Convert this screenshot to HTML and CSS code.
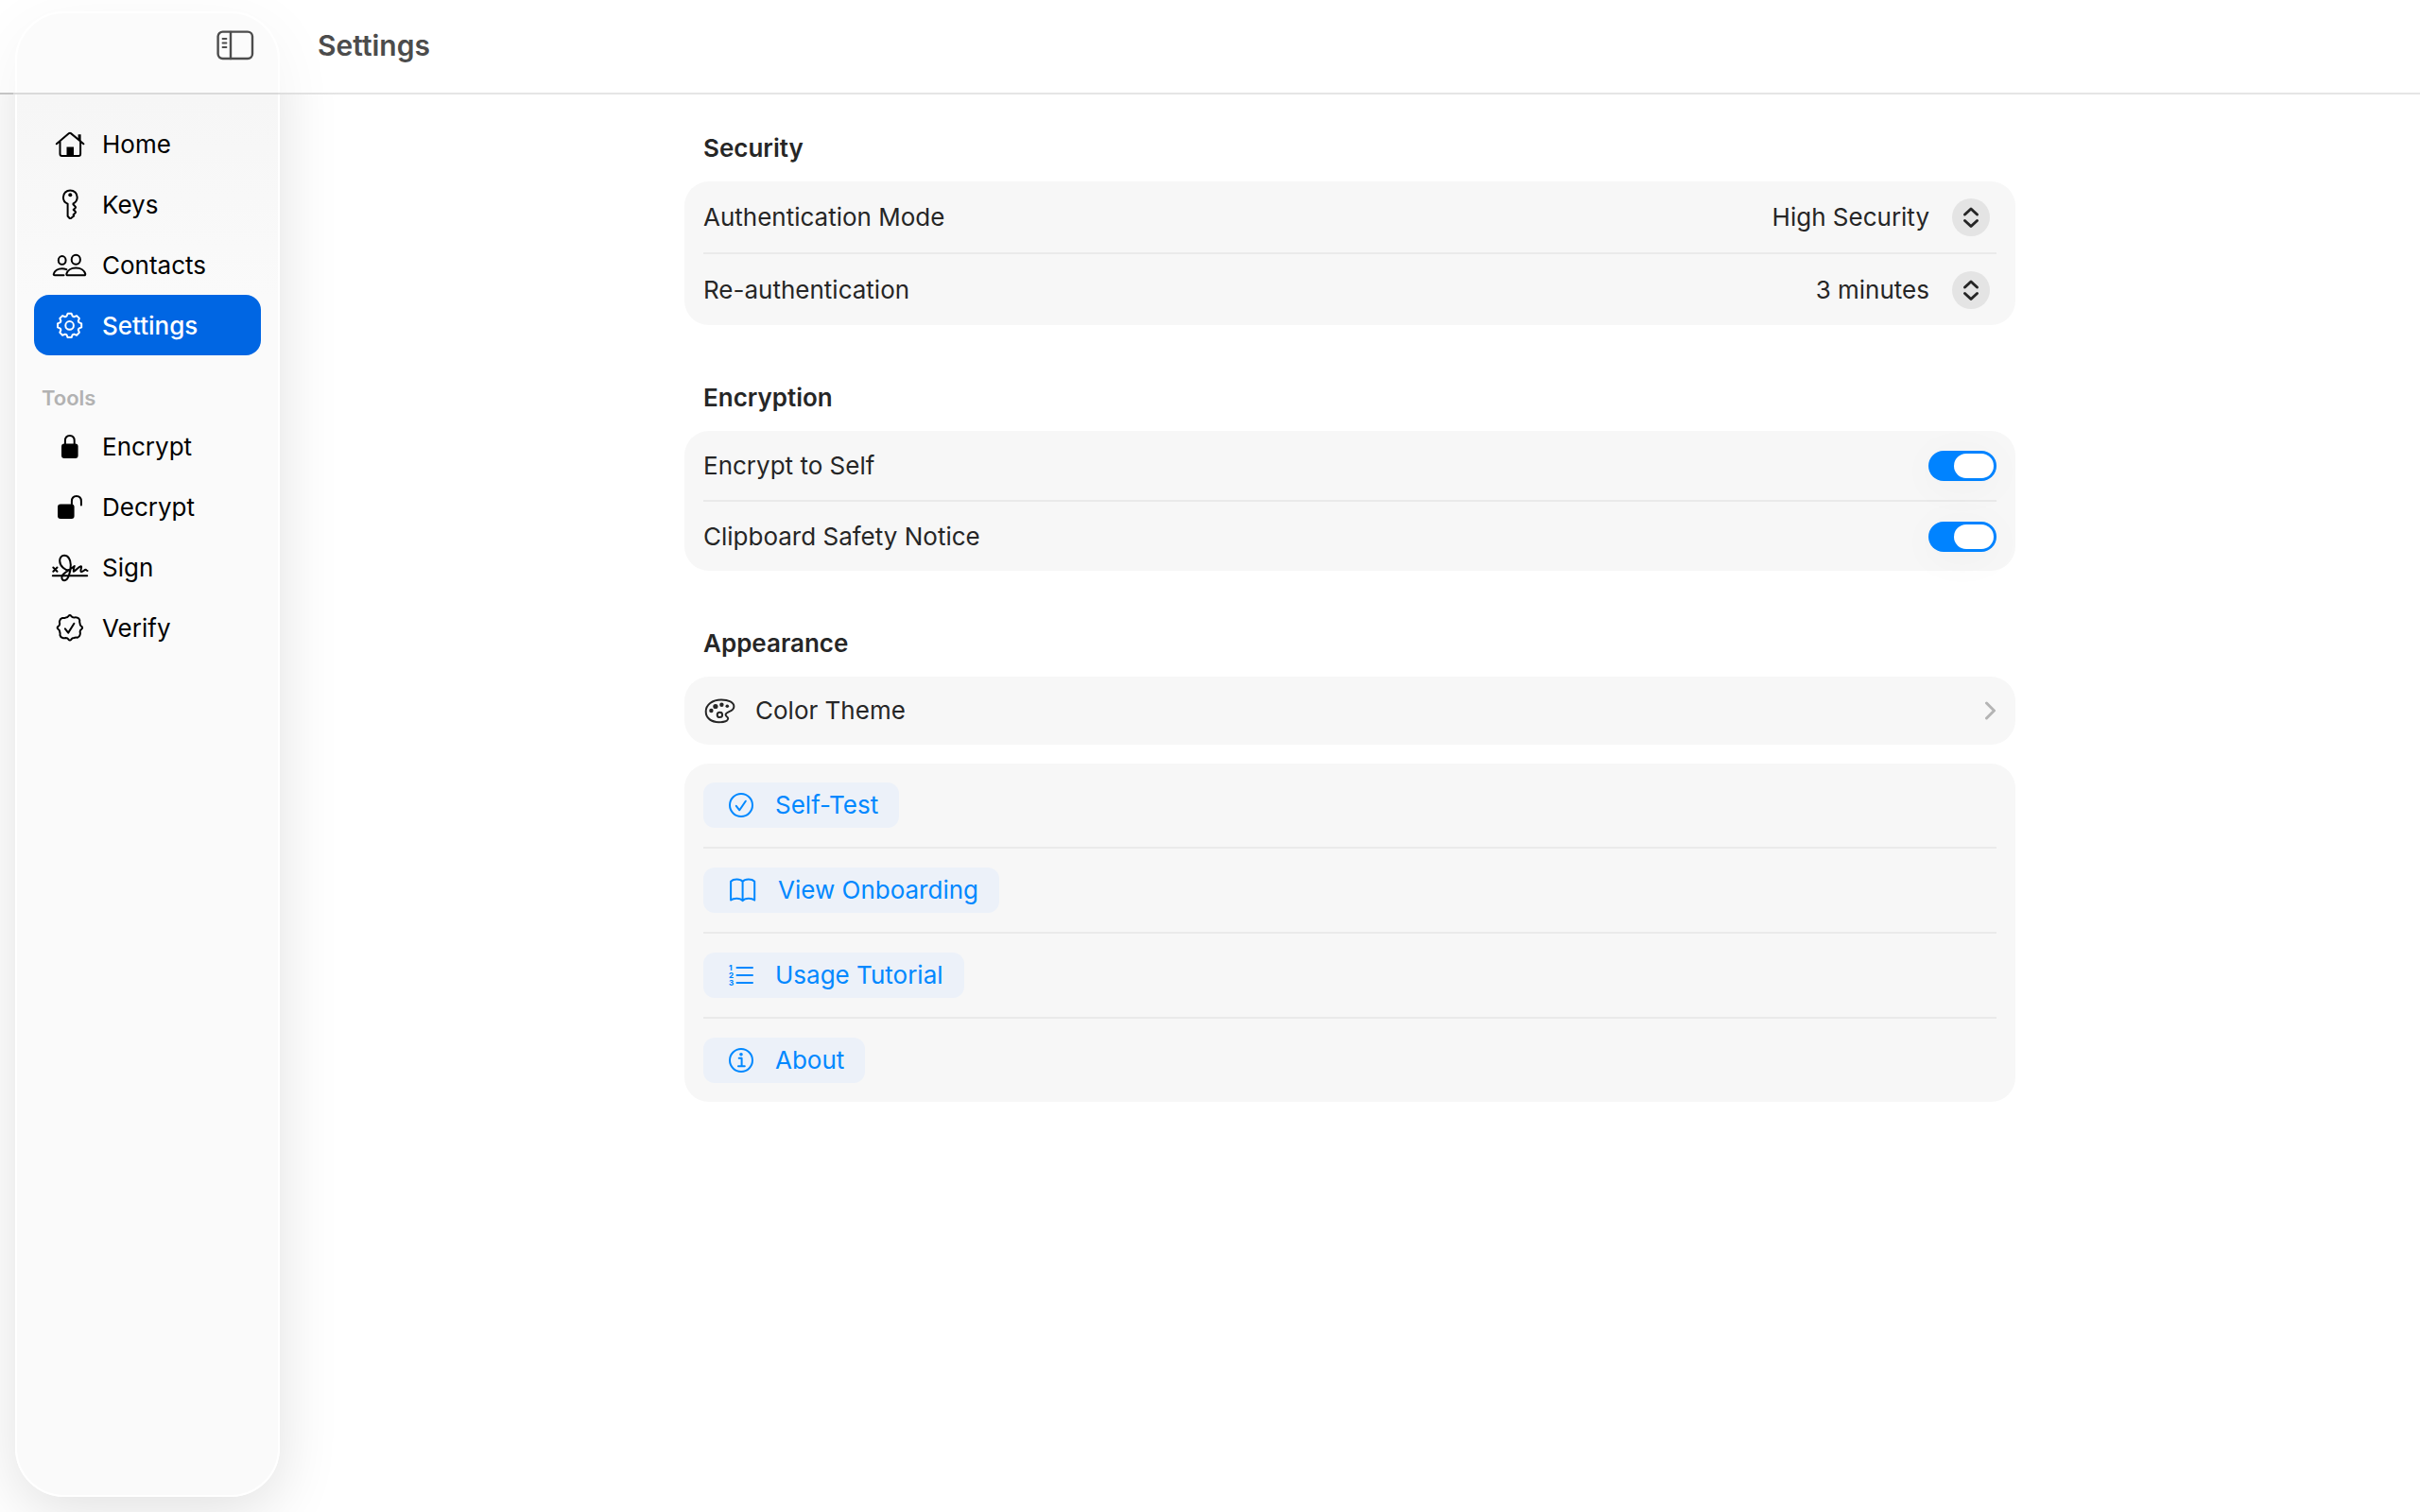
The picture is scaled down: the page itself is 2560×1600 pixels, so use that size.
FILE: index.html
```html
<!DOCTYPE html>
<html lang="en">
<head>
<meta charset="utf-8">
<meta name="viewport" content="width=device-width, initial-scale=1">
<title>Settings</title>
<link rel="stylesheet" href="styles.css">
</head>
<body>
<div class="app">
  <header class="toolbar">
    <div class="toolbar-side">
      <button class="sidebar-toggle" type="button" aria-label="Toggle sidebar">
        <svg width="40" height="32" viewBox="0 0 40 32" fill="none" stroke="currentColor" stroke-width="2.4" stroke-linecap="round"><rect x="1.6" y="1.6" width="36.4" height="28.4" rx="5"/><path d="M15 2v28"/><path d="M6.5 9h4M6.5 13.5h4M6.5 18h4" stroke-width="1.8"/></svg>
      </button>
    </div>
    <h1 class="title">Settings</h1>
  </header>

  <aside class="sidebar">
    <nav class="nav">
      <a class="nav-item" href="#home">
        <svg class="nav-icon" viewBox="0 0 40 32"><path d="M5.800 16.300 19 5.100q1-.8 2 0l13.400 11.200M9.500 14v13q0 2 2 2h17.600q2 0 2-2V14"/><path class="solid" d="M28.600 6.300h3v7.500l-3-2.600zM16.500 19.500h7.500V29h-7.500z"/></svg>
        <span class="nav-label">Home</span></a>
      <a class="nav-item" href="#keys">
        <svg class="nav-icon" viewBox="0 0 40 32"><path d="M17.600 15.600C14.600 14.600 12.900 12 12.900 8.800c0-4.200 3.200-7.400 7.400-7.400s7.400 3.200 7.400 7.400c0 2.900-1.500 5.300-4.200 6.500l-.1 1 2.300 2.300q.6.700 0 1.400l-2 1.900 2 1.900q.6.700 0 1.400L23.600 27.200l.6 1.300-3.200 2.500q-.7.500-1.300 0l-2.100-2.200z"/><circle class="solid" cx="20.300" cy="6.200" r="2"/></svg>
        <span class="nav-label">Keys</span></a>
      <a class="nav-item" href="#contacts">
        <svg class="nav-icon" viewBox="0 0 40 32"><ellipse cx="26.300" cy="10.700" rx="4.600" ry="5"/><ellipse cx="11.700" cy="11.400" rx="3.900" ry="4.400"/><path d="M17.700 27.300h17.300c1.100 0 1.500-.7 1.200-1.700-1-3.300-4.700-6.200-9.900-6.200s-8.900 2.900-9.900 6.200c-.3 1 .2 1.700 1.300 1.700zM13.500 27.300H4c-1 0-1.500-.6-1.200-1.500.9-3 4.300-5.600 8.900-5.600 1.800 0 3.300.4 4.700 1"/></svg>
        <span class="nav-label">Contacts</span></a>
      <a class="nav-item active" href="#settings" aria-current="page">
        <svg class="nav-icon" viewBox="0 0 40 32"><g transform="translate(19.600 16.400)"><path d="M-3.200-9.800-2-12.600 2-12.600 3.200-9.800 4.700-9.200 7.500-10.300 10.300-7.500 9.200-4.700 9.800-3.200 12.600-2 12.600 2 9.800 3.200 9.200 4.700 10.300 7.500 7.500 10.300 4.700 9.200 3.200 9.800 2 12.600-2 12.600-3.200 9.800-4.700 9.200-7.500 10.300-10.300 7.500-9.200 4.700-9.800 3.200-12.600 2-12.600-2-9.800-3.200-9.200-4.700-10.300-7.500-7.500-10.300-4.700-9.200z"/><circle r="4.300"/></g></svg>
        <span class="nav-label">Settings</span></a>
      <h2 class="nav-heading">Tools</h2>
      <a class="nav-item" href="#encrypt">
        <svg class="nav-icon" viewBox="0 0 40 32"><rect class="solid" x="11" y="13.500" width="17.600" height="15.500" rx="3"/><path d="M14.900 14.500V10.500c0-3.500 2-5.500 4.900-5.500s4.900 2 4.900 5.500v4"/></svg>
        <span class="nav-label">Encrypt</span></a>
      <a class="nav-item" href="#decrypt">
        <svg class="nav-icon" viewBox="0 0 40 32"><rect class="solid" x="7" y="13.500" width="17.600" height="15.500" rx="3"/><path d="M21.900 14.500V10.500c0-3.500 2-5.500 5-5.500s5 2 5 5.500v4"/></svg>
        <span class="nav-label">Decrypt</span></a>
      <a class="nav-item" href="#sign">
        <svg class="nav-icon" viewBox="0 0 40 32"><path d="M1.800 25.300h36.400M2.300 16.500l4.200 4.200M6.500 16.500l-4.200 4.200"/><path d="M20 19.500C15 20 9.200 15 9.200 9.500 9.200 6 11 3.800 14 3.800c4 0 6.800 4.200 6.800 10 0 7-2.600 16.400-6.600 16.400-2 0-3.200-1.600-2.700-4 .8-4 8.500-7 13.300-11.200-.6 1.500-1.500 4.200-1 5.700 3-1 4.700-4.700 7.800-5.400 1.800.2-1.600 4.800.4 5.700 2 .4 3.200-2.200 4.600-2.200.8 0 .6 1.200 1.900 1.200"/></svg>
        <span class="nav-label">Sign</span></a>
      <a class="nav-item" href="#verify">
        <svg class="nav-icon" viewBox="0 0 40 32"><g transform="translate(19.900 16.300)"><path d="M-4.400-10.700Q-2.400-10.700-1.500-12.300 0-14.200 1.500-12.300 2.400-10.700 4.400-10.700 6-11.400 7.600-10.700 9.900-10.200 10.400-8 10-6.200 10.700-4.400 10.700-2.400 12.300-1.500 14.200 0 12.300 1.500 10.700 2.400 10.700 4.400 11.400 6 10.700 7.600 10.200 9.900 8 10.400 6.200 10 4.400 10.700 2.400 10.700 1.500 12.300 0 14.200-1.500 12.300-2.400 10.700-4.400 10.700-6 11.400-7.600 10.700-9.900 10.200-10.400 8-10 6.200-10.700 4.400-10.700 2.400-12.300 1.500-14.200 0-12.300-1.500-10.700-2.400-10.700-4.400-11.400-6-10.700-7.600-10.200-9.900-8-10.400-6.200-10-4.400-10.700z"/><path d="m-5 1 3.300 4.300 6.200-9.800"/></g></svg>
        <span class="nav-label">Verify</span></a>
    </nav>
  </aside>

  <main class="content">
    <section class="section">
      <h2 class="section-title">Security</h2>
      <div class="card">
        <div class="row row-select">
          <label for="auth-mode">Authentication Mode</label>
          <div class="picker">
            <select id="auth-mode"><option>High Security</option><option>Standard</option></select>
            <svg class="picker-knob" viewBox="-20 -20 40 40"><path d="m-6.500-3 6.500-6 6.500 6M-6.500 3.500l6.500 6 6.500-6"/></svg>
          </div>
        </div>
        <div class="row row-select">
          <label for="reauth">Re-authentication</label>
          <div class="picker">
            <select id="reauth"><option>3 minutes</option><option>5 minutes</option></select>
            <svg class="picker-knob" viewBox="-20 -20 40 40"><path d="m-6.500-3 6.500-6 6.500 6M-6.500 3.500l6.500 6 6.500-6"/></svg>
          </div>
        </div>
      </div>
    </section>

    <section class="section">
      <h2 class="section-title">Encryption</h2>
      <div class="card">
        <div class="row">
          <label for="encrypt-self">Encrypt to Self</label>
          <input class="switch" id="encrypt-self" type="checkbox" role="switch" checked>
        </div>
        <div class="row">
          <label for="clipboard-notice">Clipboard Safety Notice</label>
          <input class="switch" id="clipboard-notice" type="checkbox" role="switch" checked>
        </div>
      </div>
    </section>

    <section class="section">
      <h2 class="section-title">Appearance</h2>
      <div class="card">
        <a class="row row-link" href="#theme">
          <svg class="line-icon" width="34" height="28" viewBox="0 0 34 28"><path d="M19 2.500C9.500 2.500 2.700 7.800 2.700 15c0 6.800 5.600 11.200 13.800 11.200 4.700 0 9.700-1.200 9.700-3.900 0-1.700-2.600-1.900-2.600-4 0-3.700 8.800-2.800 8.800-8.600 0-4.500-5.700-7.200-13.400-7.200z"/><circle cx="17.400" cy="18.400" r="2.700"/><g fill="currentColor" stroke="none"><circle cx="8.400" cy="14" r="2.200"/><circle cx="12.900" cy="9.500" r="2.600"/><circle cx="19.400" cy="7.800" r="2.200"/><circle cx="25.300" cy="9.200" r="1.800"/></g></svg>
          <span>Color Theme</span>
          <svg class="chevron" width="12" height="22" viewBox="0 0 12 22"><path d="m1.500 3 8 8-8 8"/></svg>
        </a>
      </div>
      <div class="card">
        <div class="row row-action">
          <button class="action" type="button">
            <svg class="line-icon" width="26" height="28" viewBox="-13 -14 26 28"><circle r="12"/><path d="m-5.200.8 3.500 4.500 6.500-9.600"/></svg>
            Self-Test</button>
        </div>
        <div class="row row-action">
          <button class="action" type="button">
            <svg class="line-icon" width="29" height="28" viewBox="0 0 29 28"><path d="M14.600 5C12.300 1.900 5 1.800 2.100 4.800V24.600C5 22.200 12 22 14.600 25.200 17.200 22 24.300 22.200 27.200 24.600V4.800C24.300 1.800 17 1.900 14.600 5V25"/></svg>
            View Onboarding</button>
        </div>
        <div class="row row-action">
          <button class="action" type="button">
            <svg class="line-icon" width="26" height="28" viewBox="0 0 26 28"><path d="M8.500 6H25M8.500 14H25M8.500 22H25"/><g class="digits"><text x="0" y="8.500">1</text><text x="0" y="16.500">2</text><text x="0" y="24.500">3</text></g></svg>
            Usage Tutorial</button>
        </div>
        <div class="row row-action">
          <button class="action" type="button">
            <svg class="line-icon" width="26" height="28" viewBox="-13 -14 26 28"><circle r="12"/><path d="M-2.300-2.200H.6V6M-3 6.300h6.800"/><circle cx="0" cy="-6.300" r="1.800" fill="currentColor" stroke="none"/></svg>
            About</button>
        </div>
      </div>
    </section>
  </main>
</div>
</body>
</html>
```
FILE: styles.css
```css
* { box-sizing: border-box; }

body {
  margin: 0;
  background: #fff;
  color: #262626;
  font-family: Inter, "Liberation Sans", sans-serif;
  font-size: 26px;
  line-height: 32px;
}

h1, h2 { margin: 0; }
a { color: inherit; text-decoration: none; }
svg { display: block; flex: none; }
button, select { font: inherit; color: inherit; border: 0; background: none; padding: 0; margin: 0; }

.app {
  display: grid;
  grid-template-columns: 296px 1fr;
  grid-template-rows: 100px 1fr;
  min-height: 100vh;
  overflow: hidden;
}

/* Translucent bar that spans the window and tints the top of the sidebar */
.toolbar {
  grid-area: 1 / 1 / 2 / 3;
  z-index: 2;
  display: grid;
  grid-template-columns: 296px 1fr;
  align-items: center;
  padding-bottom: 2px;
  background: rgba(255, 255, 255, 0.6);
  border-bottom: 2px solid;
  border-image: linear-gradient(to right, #c4c4c4 16px, #dadada 16px, #dadada 296px, #dedede 296px, #e5e5e5 360px) 2;
}
.toolbar-side { display: flex; justify-content: flex-end; padding-right: 27px; }
.sidebar-toggle { color: #4c4c4c; }
.title { padding-left: 40px; color: #4c4c4c; font-size: 30px; font-weight: 600; line-height: 36px; }

.sidebar {
  grid-area: 1 / 1 / 3 / 2;
  z-index: 1;
  margin: 12px 0 16px 16px;
  padding: 106px 18px 24px;
  border: 2px solid #fff;
  border-radius: 52px;
  background: linear-gradient(#f6f6f6 90px, #fafafa 300px);
  box-shadow: 0 16px 64px rgba(0, 0, 0, 0.12);
}
.nav { display: flex; flex-direction: column; color: #000; }
.nav-item {
  display: flex;
  align-items: center;
  gap: 14px;
  height: 64px;
  padding: 0 18px;
  border-radius: 16px;
}
.nav-item.active { background: #0066e3; color: #fff; font-weight: 500; }
.nav-label { padding-top: 2px; }
.nav-icon {
  width: 40px;
  height: 32px;
  fill: none;
  stroke: currentColor;
  stroke-width: 2;
  stroke-linecap: round;
  stroke-linejoin: round;
}
.nav-icon .solid { fill: currentColor; stroke: none; }
.nav-heading {
  padding: 26px 8px 0;
  color: #b2b2b2;
  font-size: 22px;
  font-weight: 600;
  line-height: 38px;
}

.content {
  grid-area: 2 / 2 / 3 / 3;
  display: flex;
  flex-direction: column;
  gap: 60px;
  width: 100%;
  max-width: 1448px;
  margin: 0 auto;
  padding: 40px 20px;
}
.section { display: flex; flex-direction: column; gap: 20px; }
.section-title { padding: 2px 20px 0; font-size: 26px; font-weight: 600; line-height: 30px; }

.card { padding: 0 20px; border-radius: 26px; background: #f7f7f7; }
.row { display: flex; align-items: center; justify-content: space-between; height: 73px; }
.row + .row { box-sizing: content-box; border-top: 2px solid #eaeaea; }
.row-select { height: 75px; }
.row-link { height: 72px; justify-content: flex-start; gap: 21px; }
.row-action { height: 88px; }

.picker { display: grid; align-items: center; justify-items: end; }
.picker > * { grid-area: 1 / 1; }
.picker select { appearance: none; height: 40px; padding-right: 71px; text-align-last: right; }
.picker-knob {
  width: 40px;
  height: 40px;
  margin-right: 7px;
  border-radius: 50%;
  background: #e4e4e4;
  fill: none;
  stroke: currentColor;
  stroke-width: 3;
  stroke-linecap: round;
  stroke-linejoin: round;
  pointer-events: none;
}

.switch {
  appearance: none;
  display: flex;
  width: 72px;
  height: 32px;
  margin: 0;
  padding: 3px;
  border-radius: 16px;
  background: #ccc;
  box-shadow: 0 6px 44px rgba(0, 0, 0, 0.04);
}
.switch::before { content: ""; width: 42px; border-radius: 13px; background: #fff; }
.switch:checked { justify-content: flex-end; background: #0083ff; }

.line-icon {
  fill: none;
  stroke: currentColor;
  stroke-width: 2;
  stroke-linecap: round;
  stroke-linejoin: round;
}
.digits { fill: currentColor; stroke: none; font-size: 8px; font-weight: 800; }
.chevron {
  margin-left: auto;
  fill: none;
  stroke: #b4b4b4;
  stroke-width: 3;
  stroke-linecap: round;
  stroke-linejoin: round;
}

.action {
  display: flex;
  align-items: center;
  gap: 23px;
  height: 48px;
  padding: 0 22px 0 27px;
  border-radius: 12px;
  background: #ecf1f9;
  color: #0088ff;
}
```
